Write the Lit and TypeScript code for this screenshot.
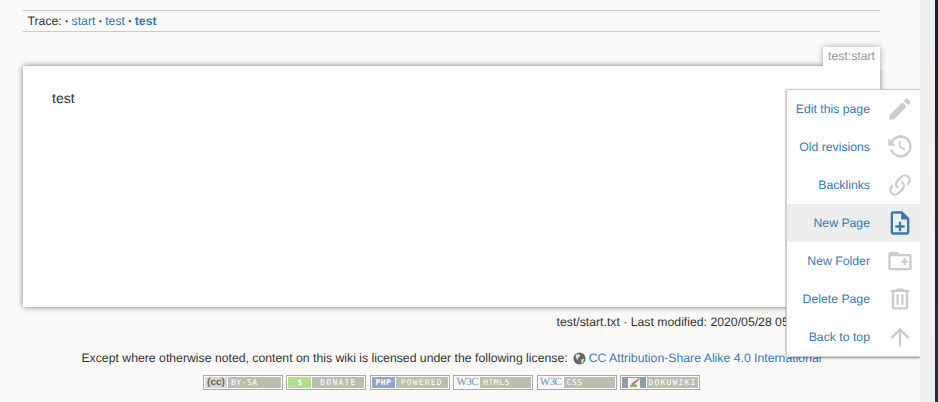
import { LitElement, html, css, svg } from 'lit';
import { customElement } from 'lit/decorators.js';

const ICONS: Record<string, string> = {
  pencil: 'M20.71 7.04c.39-.39.39-1.04 0-1.41l-2.34-2.34c-.37-.39-1.02-.39-1.41 0l-1.84 1.83 3.75 3.75M3 17.25V21h3.75L17.81 9.93l-3.75-3.75L3 17.25z',
  history: 'M11 7v5.11l4.71 2.79.79-1.28-4-2.37V7m.5-5C8.97 2 5.91 3.92 4.27 6.77L2 4.5V11h6.5L5.75 8.25C6.96 5.73 9.5 4 12.5 4a7.5 7.5 0 0 1 7.5 7.5 7.5 7.5 0 0 1-7.5 7.5c-3.27 0-6.03-2.09-7.06-5h-2.1c1.1 4.03 4.77 7 9.16 7 5.24 0 9.5-4.25 9.5-9.5A9.5 9.5 0 0 0 12.5 2z',
  link: 'M10.59 13.41c.41.39.41 1.03 0 1.42-.39.39-1.03.39-1.42 0a5.003 5.003 0 0 1 0-7.07l3.54-3.54a5.003 5.003 0 0 1 7.07 0 5.003 5.003 0 0 1 0 7.07l-1.49 1.49c.01-.82-.12-1.64-.4-2.42l.47-.48a2.982 2.982 0 0 0 0-4.24 2.982 2.982 0 0 0-4.24 0l-3.53 3.53a2.982 2.982 0 0 0 0 4.24m2.82-4.24c.39-.39 1.03-.39 1.42 0a5.003 5.003 0 0 1 0 7.07l-3.54 3.54a5.003 5.003 0 0 1-7.07 0 5.003 5.003 0 0 1 0-7.07l1.49-1.49c-.01.82.12 1.64.4 2.43l-.47.47a2.982 2.982 0 0 0 0 4.24 2.982 2.982 0 0 0 4.24 0l3.53-3.53a2.982 2.982 0 0 0 0-4.24.973.973 0 0 1 0-1.42z',
  filePlus: 'M14 2H6a2 2 0 0 0-2 2v16a2 2 0 0 0 2 2h12a2 2 0 0 0 2-2V8l-6-6m4 18H6V4h7v5h5v11m-5-9v3h3v2h-3v3h-2v-3H8v-2h3v-3h2z',
  folderPlus: 'M10 4l2 2h8a2 2 0 0 1 2 2v10a2 2 0 0 1-2 2H4a2 2 0 0 1-2-2V6a2 2 0 0 1 2-2h6m-6 4v10h16V8H4m11 1.5h2v2h2v2h-2v2h-2v-2h-2v-2h2v-2z',
  trash: 'M9 3v1H4v2h1v13a2 2 0 0 0 2 2h10a2 2 0 0 0 2-2V6h1V4h-5V3H9M7 6h10v13H7V6m2 2v9h2V8H9m4 0v9h2V8h-2z',
  arrowUp: 'M13 20h-2V8l-5.5 5.5-1.42-1.42L12 4.16l7.92 7.92-1.42 1.42L13 8v12z',
};

const MENU = [
  { label: 'Edit this page', icon: 'pencil' },
  { label: 'Old revisions', icon: 'history' },
  { label: 'Backlinks', icon: 'link' },
  { label: 'New Page', icon: 'filePlus', active: true },
  { label: 'New Folder', icon: 'folderPlus' },
  { label: 'Delete Page', icon: 'trash' },
  { label: 'Back to top', icon: 'arrowUp' },
];

const BADGES = [
  { left: 22, kind: 'cc', leftText: '(cc)', text: 'BY-SA' },
  { left: 23, kind: 'donate', leftText: '$', text: 'DONATE', center: true },
  { left: 23, kind: 'php', leftText: 'PHP', text: 'POWERED', center: true },
  { left: 24, kind: 'w3c', leftText: 'W3C', text: 'HTML5' },
  { left: 24, kind: 'w3c', leftText: 'W3C', text: 'CSS' },
  { left: 24, kind: 'doku', leftText: '', text: 'DOKUWIKI', center: true },
];

@customElement('app-root')
export class AppRoot extends LitElement {
  static styles = css`
    :host {
      display: block;
      width: 938px;
      height: 402px;
      overflow: hidden;
      position: relative;
      background: #fbfaf9;
      font-family: "Liberation Sans", Arial, sans-serif;
      font-size: 12.25px;
      color: #333;
      text-rendering: geometricPrecision;
    }
    a { color: #337ab7; text-decoration: none; }
    .site { width: 920px; height: 402px; box-sizing: border-box; padding: 10px 40px 0 23px; }
    .trace {
      border-top: 1px solid #ccc;
      border-bottom: 1px solid #ccc;
      height: 20px;
      line-height: 20px;
      padding-left: 4.5px;
    }
    .trace .sep {
      display: inline-block;
      width: 3px;
      text-align: center;
      font-size: 8px;
      line-height: 8px;
      vertical-align: 1px;
    }
    .pagewrap { margin-top: 15px; }
    .pageid {
      display: flex;
      justify-content: flex-end;
      height: 19px;
    }
    .pageid span {
      background: #fff;
      color: #999;
      padding: 0 5px;
      line-height: 19px;
      box-shadow: 0 0 6px rgba(0,0,0,.35);
      clip-path: inset(-6px -6px 0 -6px);
    }
    .page {
      background: #fff;
      height: 241px;
      box-sizing: border-box;
      padding: 22px 29px;
      font-size: 14px;
      line-height: 20px;
      box-shadow: 0 0 6px rgba(0,0,0,.5);
    }
    .modified { text-align: right; margin-top: 7px; line-height: 16px; white-space: nowrap; }
    .license {
      margin-top: 20px;
      display: flex;
      align-items: center;
      justify-content: center;
      white-space: nowrap;
      line-height: 16px;
    }
    .globe { margin: 0 3px 0 5px; }
    .badges { display: flex; justify-content: center; gap: 3.4px; margin-top: 9px; }
    .badge {
      box-sizing: border-box;
      height: 15px;
      width: 80px;
      border: 1px solid #aaa;
      padding: 1px;
      background: #fff;
      display: flex;
      gap: 1px;
    }
    .badge .l {
      font: bold 8px/11px "DejaVu Sans Mono", monospace;
      text-align: center;
      overflow: hidden;
      flex: none;
      white-space: nowrap;
    }
    .l.cc { background: #d9d9d0; color: #666; font: bold 10px/11px "Liberation Sans", sans-serif; }
    .l.donate { background: #b3e08f; color: #fff; }
    .l.php { background: #90a8c8; color: #fff; letter-spacing: .4px; }
    .l.w3c { background: #f6f6f6; color: #7592ba; font: 11px/11px "Liberation Serif", serif; letter-spacing: -.6px; }
    .l.doku { background: #8f9ea6; }
    .l.doku svg { display: block; }
    .badge .r {
      flex: 1;
      background: #bdbdb0;
      color: #fff;
      font: 8px/11px "DejaVu Sans Mono", monospace;
      letter-spacing: .5px;
      padding-left: 3px;
      white-space: nowrap;
      overflow: hidden;
    }
    .badge .r.center { text-align: center; padding-left: 0; letter-spacing: 1.2px; }
    .menu {
      position: absolute;
      left: 786px;
      top: 89px;
      width: 134px;
      box-sizing: border-box;
      background: #fff;
      border: 1px solid #ccc;
      border-right: 0;
      box-shadow: 0 1px 2px rgba(0,0,0,.45);
    }
    .item {
      height: 38px;
      display: flex;
      align-items: center;
      justify-content: flex-end;
      padding-right: 6px;
      gap: 16px;
    }
    .item.active { background: #eee; }
    .item svg { width: 28px; height: 28px; fill: #ccc; display: block; flex: none; }
    .item.active svg { fill: #337ab7; }
    .gutter { position: absolute; left: 920px; top: 0; width: 15px; height: 402px; background: #f0f0f0; }
    .dark { position: absolute; left: 935px; top: 0; width: 3px; height: 402px; background: linear-gradient(#14232c, #1c3047); }
  `;

  renderIcon(name: string) {
    return html`<svg viewBox="0 0 24 24">${svg`<path d=${ICONS[name]}></path>`}</svg>`;
  }

  render() {
    const sep = html`<span class="sep">•</span>`;
    return html`
      <div class="site">
        <div class="trace">Trace: ${sep} <a href="#">start</a> ${sep} <a href="#">test</a> ${sep} <a href="#"><b>test</b></a></div>
        <div class="pagewrap">
          <div class="pageid"><span>test:start</span></div>
          <div class="page">test</div>
        </div>
        <div class="modified">test/start.txt · Last modified: 2020/05/28 05:12 by superuser</div>
        <div class="license">
          Except where otherwise noted, content on this wiki is licensed under the following license:
          <svg class="globe" width="13" height="13" viewBox="0 0 14 14"><circle cx="7" cy="7" r="6.5" fill="#666"></circle><path d="M3 3l3-1 2 2-2 2-1 3-2-3zM9 8l3-1-1 4-2 1z" fill="#ddd"></path></svg>
          <a href="#">CC Attribution-Share Alike 4.0 International</a>
        </div>
        <div class="badges">
          ${BADGES.map(b => html`
            <div class="badge">
              <div class="l ${b.kind}" style="width:${b.left}px">${b.kind === 'doku' ? html`<svg width="24" height="11" viewBox="0 0 24 11"><rect x="6" y="1" width="12" height="10" fill="#eef2ea"></rect><path d="M8 8l4-1 3 1v2H8z" fill="#7fb56f"></path><path d="M9 7l8-6 1 1-7 6z" fill="#c8705a"></path></svg>` : b.leftText}</div>
              <div class="r ${b.center ? 'center' : ''}">${b.text}</div>
            </div>`)}
        </div>
      </div>
      <div class="menu">
        ${MENU.map(m => html`
          <div class="item ${m.active ? 'active' : ''}">
            <a href="#">${m.label}</a>
            ${this.renderIcon(m.icon)}
          </div>`)}
      </div>
      <div class="gutter"></div>
      <div class="dark"></div>
    `;
  }
}
